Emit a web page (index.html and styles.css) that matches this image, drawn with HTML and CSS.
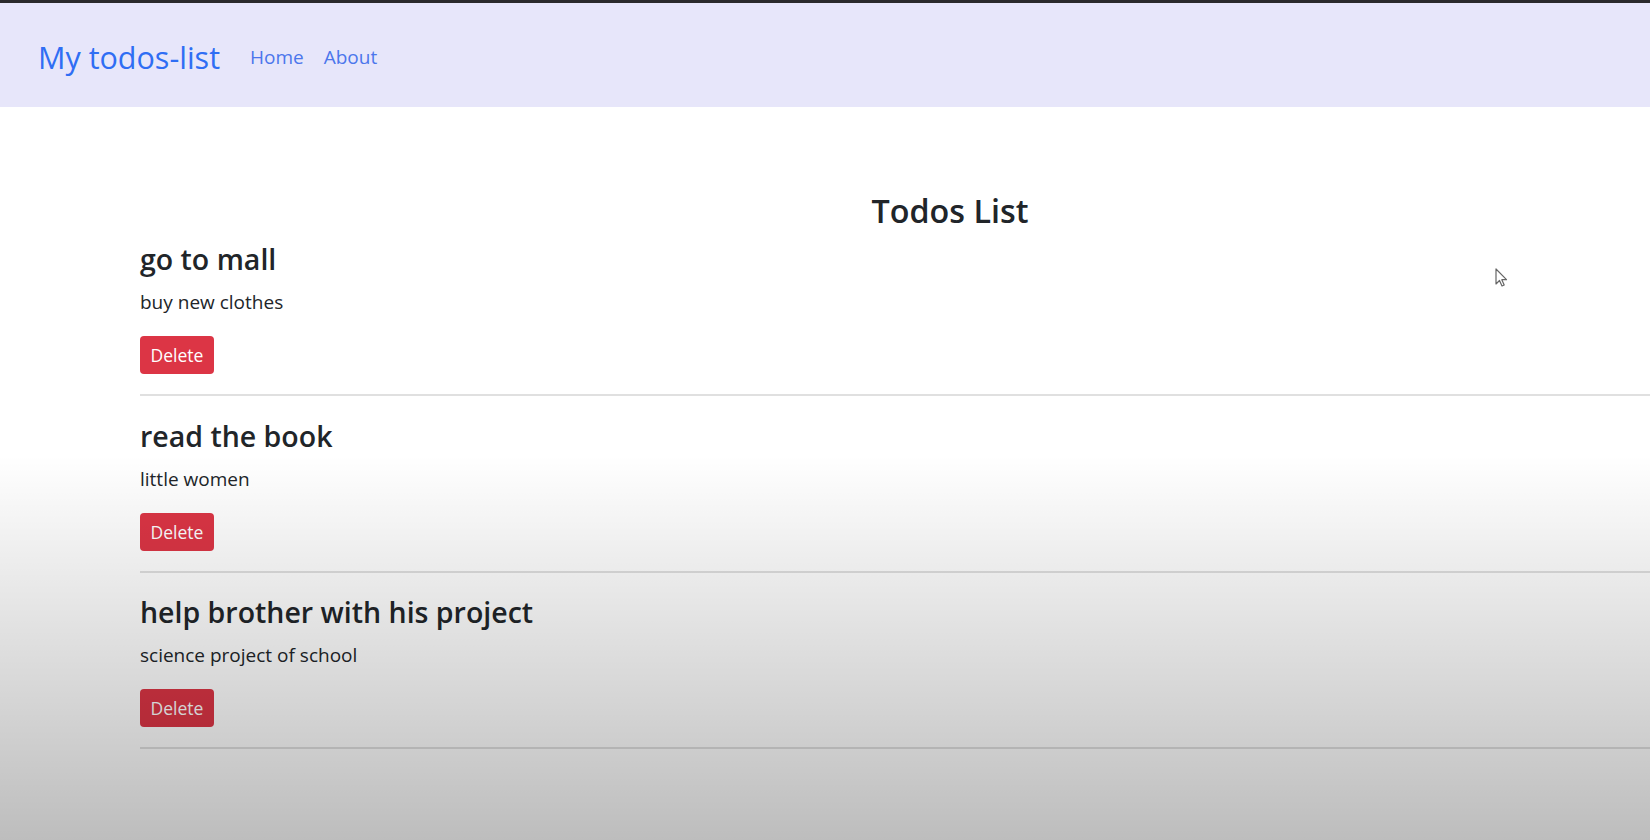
FILE: index.html
```html
<!DOCTYPE html>
<html lang="en">
<head>
<meta charset="utf-8">
<title>My todos-list</title>
<link rel="stylesheet" href="styles.css">
</head>
<body>
<div class="topstrip"></div>
<nav class="navbar">
  <a class="brand" href="#">My todos-list</a>
  <ul class="nav-links">
    <li><a href="#">Home</a></li>
    <li><a href="#">About</a></li>
  </ul>
</nav>
<main class="container">
  <h2 class="page-title">Todos List</h2>
  <div class="todo">
    <h4 class="todo-title">go to mall</h4>
    <p class="todo-desc">buy new clothes</p>
    <button class="btn-delete">Delete</button>
    <hr class="divider">
  </div>
  <div class="todo">
    <h4 class="todo-title">read the book</h4>
    <p class="todo-desc">little women</p>
    <button class="btn-delete">Delete</button>
    <hr class="divider">
  </div>
  <div class="todo">
    <h4 class="todo-title">help brother with his project</h4>
    <p class="todo-desc">science project of school</p>
    <button class="btn-delete">Delete</button>
    <hr class="divider">
  </div>
</main>
<svg class="cursor" width="14" height="20" viewBox="0 0 14 20"><path d="M1 1 L1 16 L4.5 12.5 L7 18 L9.2 17 L6.8 11.7 L11.5 11.7 Z" fill="#fff" stroke="#666" stroke-width="1.2" stroke-linejoin="round"/></svg>
<div class="shade"></div>
</body>
</html>
```
FILE: styles.css
```css
html, body {
  margin: 0;
  padding: 0;
}
body {
  width: 1650px;
  height: 840px;
  overflow: hidden;
  position: relative;
  background: #fff;
  font-family: "Open Sans", "Noto Sans", sans-serif;
  color: #212529;
}
.topstrip {
  height: 3px;
  background: #2a2a2c;
}
.navbar {
  height: 104px;
  background: #e7e6fa;
  display: flex;
  align-items: center;
  padding-left: 38px;
  box-sizing: border-box;
}
.brand {
  font-size: 30.5px;
  line-height: 40px;
  color: #2f6ef4;
  text-decoration: none;
  margin-top: 3px;
}
.nav-links {
  list-style: none;
  display: flex;
  gap: 20px;
  margin: 4px 0 0 30px;
  padding: 0;
}
.nav-links a {
  font-size: 19px;
  line-height: 26px;
  color: #4c76ec;
  text-decoration: none;
}
.container {
  width: 1620px;
  margin-left: 140px;
  padding-top: 81px;
}
.page-title {
  margin: 0;
  font-size: 32.3px;
  line-height: 44px;
  font-weight: 600;
  text-align: center;
}
.todo {
  display: flex;
  flex-direction: column;
  align-items: flex-start;
}
.todo:first-of-type {
  margin-top: 9px;
}
.todo-title {
  margin: 0;
  font-size: 28.5px;
  line-height: 36px;
  font-weight: 600;
}
.todo-desc {
  margin: 11px 0 0;
  font-size: 19px;
  line-height: 28px;
}
.btn-delete {
  margin-top: 20px;
  height: 38px;
  padding: 0 10.5px;
  border: none;
  border-radius: 4px;
  background: #dc3545;
  color: #fff;
  font-family: "Open Sans", "Noto Sans", sans-serif;
  font-size: 17.5px;
  line-height: 24px;
}
.divider {
  align-self: stretch;
  margin: 20px 0 21.5px;
  border: none;
  height: 2px;
  background: #e0e0e0;
}
.cursor {
  position: absolute;
  left: 1495px;
  top: 268px;
}
.shade {
  position: absolute;
  left: 0;
  right: 0;
  top: 455px;
  bottom: 0;
  pointer-events: none;
  background: linear-gradient(to bottom, rgba(0,0,0,0), rgba(0,0,0,0.26));
}
```
